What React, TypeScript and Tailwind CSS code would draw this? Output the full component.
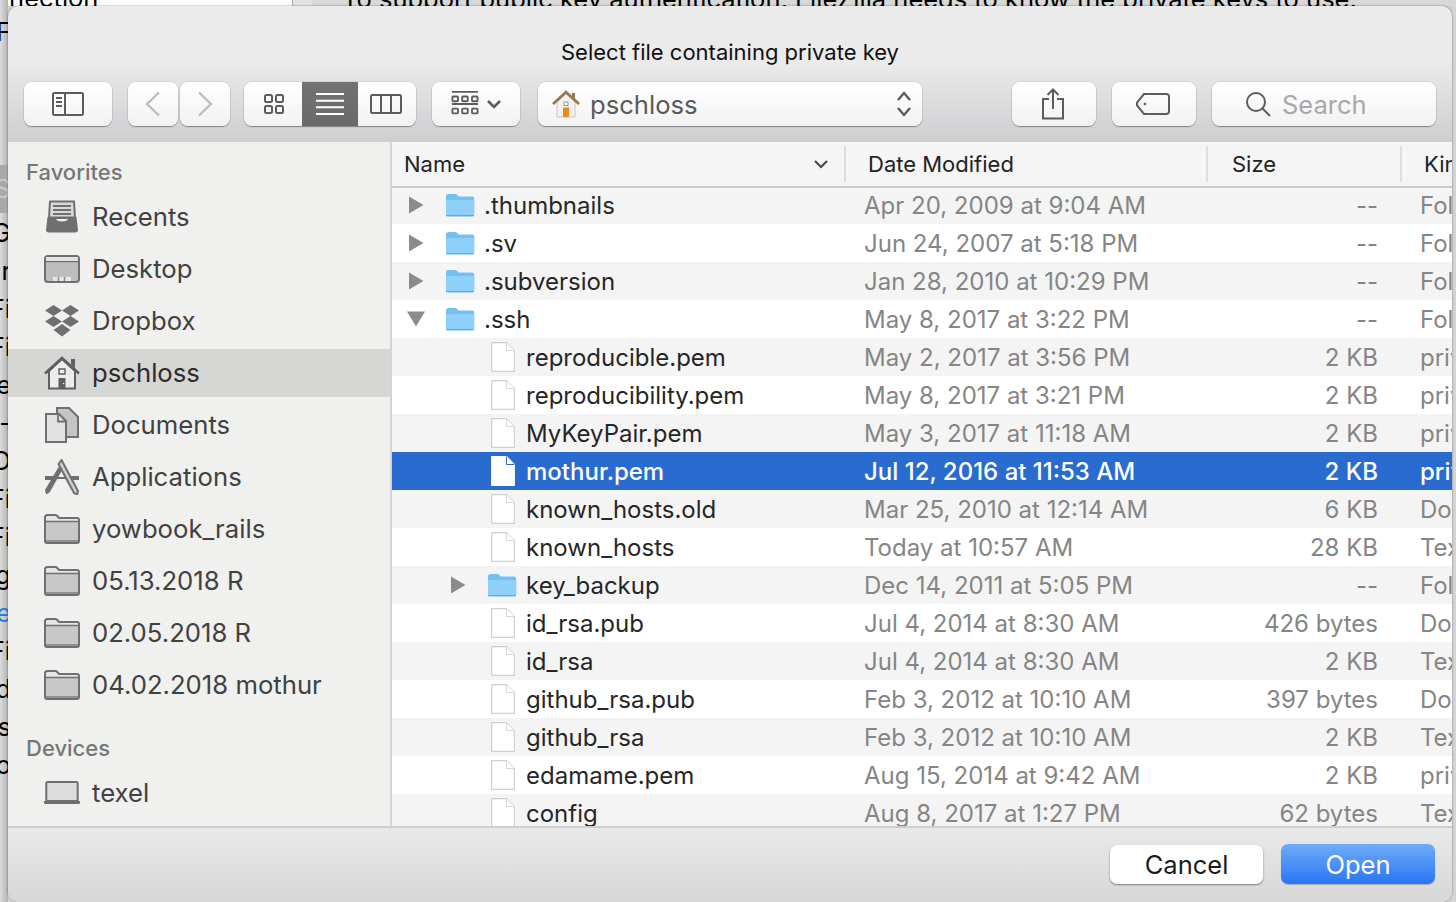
import React from "react";

type FileRow = {
  name: string;
  date: string;
  size: string;
  kind: string;
  type: "folder" | "open" | "nested" | "file";
};

const rows: FileRow[] = [
  { name: ".thumbnails", date: "Apr 20, 2009 at 9:04 AM", size: "--", kind: "Folder", type: "folder" },
  { name: ".sv", date: "Jun 24, 2007 at 5:18 PM", size: "--", kind: "Folder", type: "folder" },
  { name: ".subversion", date: "Jan 28, 2010 at 10:29 PM", size: "--", kind: "Folder", type: "folder" },
  { name: ".ssh", date: "May 8, 2017 at 3:22 PM", size: "--", kind: "Folder", type: "open" },
  { name: "reproducible.pem", date: "May 2, 2017 at 3:56 PM", size: "2 KB", kind: "privacy", type: "file" },
  { name: "reproducibility.pem", date: "May 8, 2017 at 3:21 PM", size: "2 KB", kind: "privacy", type: "file" },
  { name: "MyKeyPair.pem", date: "May 3, 2017 at 11:18 AM", size: "2 KB", kind: "privacy", type: "file" },
  { name: "mothur.pem", date: "Jul 12, 2016 at 11:53 AM", size: "2 KB", kind: "privacy", type: "file" },
  { name: "known_hosts.old", date: "Mar 25, 2010 at 12:14 AM", size: "6 KB", kind: "Document", type: "file" },
  { name: "known_hosts", date: "Today at 10:57 AM", size: "28 KB", kind: "TextEdit", type: "file" },
  { name: "key_backup", date: "Dec 14, 2011 at 5:05 PM", size: "--", kind: "Folder", type: "nested" },
  { name: "id_rsa.pub", date: "Jul 4, 2014 at 8:30 AM", size: "426 bytes", kind: "Document", type: "file" },
  { name: "id_rsa", date: "Jul 4, 2014 at 8:30 AM", size: "2 KB", kind: "TextEdit", type: "file" },
  { name: "github_rsa.pub", date: "Feb 3, 2012 at 10:10 AM", size: "397 bytes", kind: "Document", type: "file" },
  { name: "github_rsa", date: "Feb 3, 2012 at 10:10 AM", size: "2 KB", kind: "TextEdit", type: "file" },
  { name: "edamame.pem", date: "Aug 15, 2014 at 9:42 AM", size: "2 KB", kind: "privacy", type: "file" },
  { name: "config", date: "Aug 8, 2017 at 1:27 PM", size: "62 bytes", kind: "TextEdit", type: "file" },
];

const stripLetters = ["G", "r", "Fi", "Fi", "e", "-", "O", "Fi", "Fi", "ng", "e", "Fi", "d", "gs", "o"];

const BlueFolder = () => (
  <svg width="30" height="24" viewBox="0 0 30 24" className="shrink-0">
    <path d="M1 3.500C1 2 2 1 3.500 1h6.500c1.200 0 1.800.5 2.500 1.300l1 1.200H27c1.300 0 2.200.9 2.200 2.200V21c0 1.300-.9 2.200-2.200 2.200H3c-1.200 0-2-.9-2-2.200z" fill="#72c1f3" />
    <path d="M1 7h28.200v14c0 1.300-.9 2.200-2.200 2.200H3c-1.200 0-2-.9-2-2.200z" fill="#8ed0f8" />
    <path d="M1 22h28v1.200H1z" fill="#5dacdf" />
  </svg>
);

const FileIcon = ({ selected }: { selected: boolean }) => (
  <svg width="24" height="30" viewBox="0 0 24 30" className="shrink-0">
    <path d="M.7.7H15.500L23.300 8.500V29.300H.7z" fill="#ffffff" stroke={selected ? "#ffffff" : "#cfcfcf"} strokeWidth="1.200" />
    <path d="M15.500.7V8.500H23.300" fill="#ffffff" stroke={selected ? "#2a6bd0" : "#d8d8d8"} strokeWidth="1" />
  </svg>
);

const Arrow = ({ open }: { open?: boolean }) => (
  <svg width="18" height="18" viewBox="0 0 18 18" className="shrink-0">
    {open ? <path d="M0 1.500H18L9 16.500z" fill="#8b8b8b" /> : <path d="M2 .500L16.500 9 2 17.500z" fill="#8b8b8b" />}
  </svg>
);

const Row = ({ row, index }: { row: FileRow; index: number }) => {
  const selected = row.name === "mothur.pem";
  const bg = selected ? "bg-[#2a6bd0]" : index % 2 === 0 ? "bg-[#f4f4f4]" : "bg-white";
  return (
    <div className={`flex h-[38px] shrink-0 items-center whitespace-nowrap text-[24px] ${bg}`}>
      <div className={`flex w-[472px] shrink-0 items-center ${selected ? "font-medium text-white" : "text-[#262626]"}`}>
        {(row.type === "folder" || row.type === "open") && (
          <div className="flex items-center pl-[15px]">
            <Arrow open={row.type === "open"} />
            <div className="ml-[20px] mr-[9px]">
              <BlueFolder />
            </div>
          </div>
        )}
        {row.type === "nested" && (
          <div className="flex items-center pl-[57px]">
            <Arrow />
            <div className="ml-[20px] mr-[9px]">
              <BlueFolder />
            </div>
          </div>
        )}
        {row.type === "file" && (
          <div className="pl-[99px] pr-[11px]">
            <FileIcon selected={selected} />
          </div>
        )}
        <span className="pt-[2px]">{row.name}</span>
      </div>
      <div className={`w-[340px] shrink-0 pt-[2px] ${selected ? "font-medium text-white" : "text-[#858585]"}`}>{row.date}</div>
      <div className={`w-[174px] shrink-0 pt-[2px] text-right ${selected ? "font-medium text-white" : "text-[#858585]"}`}>{row.size}</div>
      <div className={`ml-[42px] pt-[2px] ${selected ? "font-medium text-white" : "text-[#858585]"}`}>{row.kind}</div>
    </div>
  );
};

const iconStroke = "#6f6f6f";

const RecentsIcon = () => (
  <svg width="36" height="34" viewBox="0 0 36 34">
    <path d="M6 1.500h24l1 16H5z" fill="#d9d9d9" stroke={iconStroke} strokeWidth="2" />
    <path d="M9 6h18M9 10h18M9 14h18M9 18h18" stroke={iconStroke} strokeWidth="1.800" />
    <path d="M3.500 17H11c1 3 3 4.500 7 4.500s6-1.500 7-4.500h7.500l1.500 13c0 1.500-1 2.500-2.500 2.500h-27C3 32.500 2 31.500 2 30z" fill="#6f6f6f" />
  </svg>
);

const DesktopIcon = () => (
  <svg width="36" height="28" viewBox="0 0 36 28">
    <rect x="1" y="1" width="34" height="26" rx="3" fill="#bdbdbd" stroke={iconStroke} strokeWidth="2" />
    <path d="M1 6.500h34" stroke={iconStroke} strokeWidth="1.500" />
    <path d="M2 2h32v4H2z" fill="#e2e2e2" />
    <path d="M9 22h18v4H9z" fill="#e8e8e8" />
    <path d="M14.500 22v4M20.500 22v4" stroke="#8d8d8d" strokeWidth="1.500" />
  </svg>
);

const DropboxIcon = () => (
  <svg width="36" height="32" viewBox="0 0 36 32" fill="#6f6f6f">
    <path d="M9.500 0L18 5.500 9.500 11 1 5.500zM26.500 0L35 5.500 26.500 11 18 5.500zM9.500 11L18 16.500 9.500 22 1 16.500zM26.500 11L35 16.500 26.500 22 18 16.500zM18 19L26.500 25 18 31.500 9.500 25z" />
  </svg>
);

const HomeIcon = () => (
  <svg width="36" height="34" viewBox="0 0 36 34">
    <path d="M5 15v17.500h26V15L18 3z" fill="#ececec" stroke="#5f5f5f" strokeWidth="2" />
    <path d="M1 17.500L18 2l17 15.500" fill="none" stroke="#5f5f5f" strokeWidth="2.600" />
    <path d="M27 3h4v9l-4-3.500z" fill="#5f5f5f" />
    <path d="M15 13h6v5h-6z" fill="#ececec" stroke="#5f5f5f" strokeWidth="1.400" />
    <path d="M14.500 22h7v10.500h-7z" fill="#5f5f5f" />
    <circle cx="19.500" cy="27.500" r=".8" fill="#ececec" />
  </svg>
);

const DocumentsIcon = () => (
  <svg width="34" height="36" viewBox="0 0 34 36">
    <path d="M12 1h12l9 9v20H12z" fill="#c4c4c4" stroke={iconStroke} strokeWidth="2" />
    <path d="M1 7h13l7 7v21H1z" fill="#e2e2e2" stroke={iconStroke} strokeWidth="2" />
    <path d="M13 7.500v7h8" fill="none" stroke={iconStroke} strokeWidth="1.800" />
  </svg>
);

const ApplicationsIcon = () => (
  <svg width="36" height="36" viewBox="0 0 36 36" fill="none">
    <path d="M1 19h10M25 19h10" stroke={iconStroke} strokeWidth="4" />
    <path d="M11 19h14" stroke={iconStroke} strokeWidth="2" />
    <path d="M17.500 1L34 32l-1 3.500-3-1.500L14.500 5z" fill="#cfcfcf" stroke={iconStroke} strokeWidth="2" />
    <path d="M14.500 8L1 31l1 4.500 3.500-2L18 11.500z" fill="#6f6f6f" />
  </svg>
);

const GreyFolder = () => (
  <svg width="36" height="30" viewBox="0 0 36 30">
    <path d="M1 3.500C1 2 2 1 3.500 1H11c1 0 1.700.4 2.300 1l1.700 2h18c1.300 0 2 .8 2 2v21c0 1.300-.7 2-2 2H3c-1.300 0-2-.7-2-2z" fill="#e6e6e6" stroke={iconStroke} strokeWidth="2" />
    <path d="M2 8h32v18.500H2z" fill="#c8c8c8" />
    <path d="M1 7.500h34" stroke={iconStroke} strokeWidth="1.500" />
    <path d="M2 26h32v2H2z" fill="#8f8f8f" />
  </svg>
);

const LaptopIcon = () => (
  <svg width="36" height="24" viewBox="0 0 36 24">
    <path d="M3.500 1h29c.8 0 1.200.4 1.200 1.200V20H2.300V2.200C2.300 1.400 2.700 1 3.500 1z" fill="#dcdcdc" stroke={iconStroke} strokeWidth="2" />
    <path d="M0 20h36v1.500c0 1-.6 1.500-1.500 1.500h-33C.6 23 0 22.500 0 21.500z" fill="#6f6f6f" />
  </svg>
);

const favorites: { label: string; icon: React.ReactNode; active?: boolean }[] = [
  { label: "Recents", icon: <RecentsIcon /> },
  { label: "Desktop", icon: <DesktopIcon /> },
  { label: "Dropbox", icon: <DropboxIcon /> },
  { label: "pschloss", icon: <HomeIcon />, active: true },
  { label: "Documents", icon: <DocumentsIcon /> },
  { label: "Applications", icon: <ApplicationsIcon /> },
  { label: "yowbook_rails", icon: <GreyFolder /> },
  { label: "05.13.2018 R", icon: <GreyFolder /> },
  { label: "02.05.2018 R", icon: <GreyFolder /> },
  { label: "04.02.2018 mothur", icon: <GreyFolder /> },
];

const SidebarItem = ({ label, icon, active }: { label: string; icon: React.ReactNode; active?: boolean }) => (
  <div className={`mb-[4px] flex h-[48px] items-center pl-[36px] text-[25.7px] ${active ? "bg-[#d6d6d4] text-[#2c2c2c]" : "text-[#414141]"}`}>
    <div className="flex w-[36px] justify-center">{icon}</div>
    <span className="ml-[12px] whitespace-nowrap">{label}</span>
  </div>
);

const toolButton =
  "flex h-[44px] items-center justify-center rounded-[8px] bg-gradient-to-b from-white to-[#f2f2f2] shadow-[0_1px_1px_rgba(0,0,0,0.35),0_0_0_0.5px_rgba(0,0,0,0.12)]";

const Toolbar = () => (
  <div className="flex h-[76px] shrink-0 items-start bg-gradient-to-b from-[#e9e9e9] to-[#cecdd0] pl-[16px] pt-[16px]">
    <div className={`${toolButton} w-[88px]`}>
      <svg width="32" height="24" viewBox="0 0 32 24" fill="none" stroke="#5c5c5c" strokeWidth="2">
        <rect x="1" y="1" width="30" height="22" rx="1.500" />
        <path d="M13 1v22" />
        <path d="M4 6h6M4 10h6M4 14h6" strokeWidth="1.800" />
      </svg>
    </div>
    <div className={`${toolButton} ml-[16px] w-[50px]`}>
      <svg width="16" height="26" viewBox="0 0 16 26" fill="none" stroke="#bcbcbc" strokeWidth="2.400">
        <path d="M14 1.500L2 13l12 11.500" />
      </svg>
    </div>
    <div className={`${toolButton} ml-[2px] w-[50px]`}>
      <svg width="16" height="26" viewBox="0 0 16 26" fill="none" stroke="#bcbcbc" strokeWidth="2.400">
        <path d="M2 1.500L14 13 2 24.500" />
      </svg>
    </div>
    <div className={`${toolButton} ml-[14px] w-[172px] overflow-hidden`}>
      <div className="flex w-[58px] justify-center pl-[2px]">
        <svg width="20" height="20" viewBox="0 0 20 20" fill="none" stroke="#5c5c5c" strokeWidth="2">
          <rect x="1" y="1" width="7" height="7" rx="1.500" />
          <rect x="12" y="1" width="7" height="7" rx="1.500" />
          <rect x="1" y="12" width="7" height="7" rx="1.500" />
          <rect x="12" y="12" width="7" height="7" rx="1.500" />
        </svg>
      </div>
      <div className="flex h-full w-[56px] items-center justify-center bg-gradient-to-b from-[#737373] to-[#696969]">
        <svg width="28" height="22" viewBox="0 0 28 22" stroke="#ffffff" strokeWidth="2">
          <path d="M0 1h28M0 7.700h28M0 14.300h28M0 21h28" />
        </svg>
      </div>
      <div className="flex w-[58px] justify-center pr-[2px]">
        <svg width="32" height="20" viewBox="0 0 32 20" fill="none" stroke="#5c5c5c" strokeWidth="2">
          <rect x="1" y="1" width="30" height="18" rx="1.500" />
          <path d="M11 1v18M21 1v18" />
        </svg>
      </div>
    </div>
    <div className={`${toolButton} ml-[16px] w-[88px]`}>
      <svg width="28" height="28" viewBox="0 0 30 28" fill="none" stroke="#5c5c5c" strokeWidth="2">
        <path d="M1 1h28M1 14h28" />
        <rect x="1.500" y="6" width="6" height="5" rx="1" />
        <rect x="12" y="6" width="6" height="5" rx="1" />
        <rect x="22.500" y="6" width="6" height="5" rx="1" />
        <rect x="1.500" y="19" width="6" height="5" rx="1" />
        <rect x="12" y="19" width="6" height="5" rx="1" />
        <rect x="22.500" y="19" width="6" height="5" rx="1" />
      </svg>
      <svg width="14" height="10" viewBox="0 0 14 10" fill="none" stroke="#5c5c5c" strokeWidth="2.600" className="ml-[8px]">
        <path d="M1 2l6 6 6-6" />
      </svg>
    </div>
    <div className={`${toolButton} ml-[18px] w-[384px] justify-start pl-[14px] pr-[10px]`}>
      <svg width="28" height="28" viewBox="0 0 28 28" className="shrink-0">
        <path d="M5 12v15h18V12L14 4z" fill="#f4f2ee" stroke="#c9c5bf" strokeWidth="1" />
        <path d="M1 14L14 2l13 12" fill="none" stroke="#96754f" strokeWidth="2.600" />
        <path d="M20 3h3v7l-3-2.500z" fill="#96754f" />
        <path d="M12 12h4v3.500h-4z" fill="#ffffff" stroke="#8d8d8d" strokeWidth="1" />
        <path d="M11 17.500h6V27h-6z" fill="#e88a20" />
      </svg>
      <span className="ml-[10px] pt-[2px] text-[25.6px] text-[#5a5a5a]">pschloss</span>
      <svg width="16" height="28" viewBox="0 0 16 28" fill="none" stroke="#5c5c5c" strokeWidth="2.400" className="ml-auto">
        <path d="M2 10l6-7 6 7M2 18l6 7 6-7" />
      </svg>
    </div>
    <div className={`${toolButton} ml-[90px] w-[84px] pr-[2px]`}>
      <svg width="24" height="32" viewBox="0 0 24 32" fill="none" stroke="#5c5c5c" strokeWidth="2">
        <path d="M8 11H2v19.500h20V11h-6" />
        <path d="M12 21V1.500M6.500 7L12 1.500 17.500 7" />
      </svg>
    </div>
    <div className={`${toolButton} ml-[16px] w-[84px] pr-[2px]`}>
      <svg width="34" height="22" viewBox="0 0 34 22" fill="none" stroke="#5c5c5c" strokeWidth="2">
        <path d="M8 1h22.500A2.500 2.500 0 0 1 33 3.500v15a2.500 2.500 0 0 1-2.500 2.500H8l-7-8.500V9.500z" />
        <circle cx="9" cy="11" r="1.300" fill="#5c5c5c" stroke="none" />
      </svg>
    </div>
    <div className={`${toolButton} ml-[16px] w-[224px] justify-start pl-[33px]`}>
      <svg width="26" height="26" viewBox="0 0 26 26" fill="none" stroke="#5c5c5c" strokeWidth="2">
        <circle cx="11" cy="11" r="9" />
        <path d="M17.500 17.500L25 25" />
      </svg>
      <span className="ml-[11px] pt-[2px] text-[25.5px] text-[#a8a8a8]">Search</span>
    </div>
  </div>
);

const Sidebar = () => (
  <div className="w-[384px] shrink-0 overflow-hidden border-r-2 border-[#d3d3d3] bg-[#f0f0ef]">
    <div className="flex h-[51px] items-start pl-[18px] pt-[16px] text-[22px] leading-[28px] font-medium text-[#777777]">Favorites</div>
    {favorites.map((f) => (
      <SidebarItem key={f.label} label={f.label} icon={f.icon} active={f.active} />
    ))}
    <div className="flex h-[56px] items-start pl-[18px] pt-[21px] text-[22px] leading-[28px] font-medium text-[#777777]">Devices</div>
    <SidebarItem label="texel" icon={<LaptopIcon />} />
  </div>
);

const FileTable = () => (
  <div className="flex min-w-0 flex-1 flex-col overflow-hidden bg-white">
    <div className="relative z-10 flex h-[46px] shrink-0 items-center whitespace-nowrap border-b-2 border-[#cacaca] bg-[#f5f5f5] text-[22px] text-[#222222]">
      <div className="flex h-[36px] w-[454px] shrink-0 items-center border-r-2 border-[#dedede] pl-[12px] pr-[16px]">
        <span>Name</span>
        <svg width="14" height="10" viewBox="0 0 14 10" fill="none" stroke="#4a4a4a" strokeWidth="2.200" className="ml-auto">
          <path d="M1 2l6 6 6-6" />
        </svg>
      </div>
      <div className="flex h-[36px] w-[362px] shrink-0 items-center border-r-2 border-[#dedede] pl-[22px]">Date Modified</div>
      <div className="flex h-[36px] w-[194px] shrink-0 items-center border-r-2 border-[#dedede] pl-[24px]">Size</div>
      <div className="pl-[22px]">Kind</div>
    </div>
    <div className="-mt-[2px] flex flex-col">
      {rows.map((row, i) => (
        <Row key={row.name} row={row} index={i} />
      ))}
    </div>
  </div>
);

const Footer = () => (
  <div className="flex h-[76px] shrink-0 items-center justify-end gap-[18px] border-t-2 border-[#cfcfcf] bg-gradient-to-b from-[#e9e9e9] to-[#d7d7d7] pb-[2px] pr-[17px] text-[25.5px]">
    <button className="flex h-[39px] w-[153px] items-center justify-center rounded-[7px] bg-white pt-[2px] text-[#1c1c1c] shadow-[0_1px_2px_rgba(0,0,0,0.45)]">Cancel</button>
    <button className="flex h-[40px] w-[154px] items-center justify-center rounded-[7px] bg-gradient-to-b from-[#6fabf7] to-[#2a74f5] pt-[2px] text-white shadow-[0_1px_1px_rgba(0,0,0,0.2)]">Open</button>
  </div>
);

const App: React.FC = () => {
  return (
    <div className="relative h-[902px] w-[1456px] overflow-hidden bg-[#d4d4d4] font-['Inter','Liberation_Sans',sans-serif]">
      {/* window behind the dialog */}
      <div className="absolute left-0 top-0 flex h-[6px] w-full overflow-hidden text-[25.5px] leading-[20px] text-black">
        <div className="h-full w-[292px] bg-white">
          <span className="relative -left-[6px] -top-[12px]">nnection</span>
        </div>
        <div className="h-full w-[20px] border-l border-[#b0b0b0] bg-[#e3e3e3]" />
        <div className="h-full flex-1 whitespace-nowrap bg-[#d8d8d8] pl-[30px]">
          <span className="relative -top-[11px]">To support public key authentication, FileZilla needs to know the private keys to use.</span>
        </div>
      </div>
      <div className="absolute left-0 top-0 h-full w-[8px] overflow-hidden bg-gradient-to-r from-[#dcdcdc] to-[#b4b4b4] text-[25.5px] leading-[38px] text-black">
        <div className="flex h-[165px] w-[11px] items-start justify-end pt-[18px] leading-[28px]">F</div>
        <div className="flex h-[48px] w-[11px] items-center justify-end bg-[#a8a8a8] text-[#c8c8c8]">S</div>
        <div className="flex w-[11px] flex-col pt-[1px]">
          {stripLetters.map((letter, i) => (
            <div key={i} className={`flex h-[38px] justify-end whitespace-nowrap ${i === 10 ? "text-[#2a7bd8]" : ""}`}>
              {letter}
            </div>
          ))}
        </div>
      </div>

      {/* dialog */}
      <div className="absolute bottom-0 left-[8px] right-[4px] top-[6px] flex flex-col overflow-hidden rounded-[10px] bg-[#ebebeb] shadow-[0_0_2px_rgba(0,0,0,0.5)]">
        <div className="flex h-[60px] shrink-0 items-end justify-center text-[22px] leading-[28px] text-[#111111]">
          <span>Select file containing private key</span>
        </div>
        <Toolbar />
        <div className="flex min-h-0 flex-1">
          <Sidebar />
          <FileTable />
        </div>
        <Footer />
      </div>
    </div>
  );
};

export default App;
